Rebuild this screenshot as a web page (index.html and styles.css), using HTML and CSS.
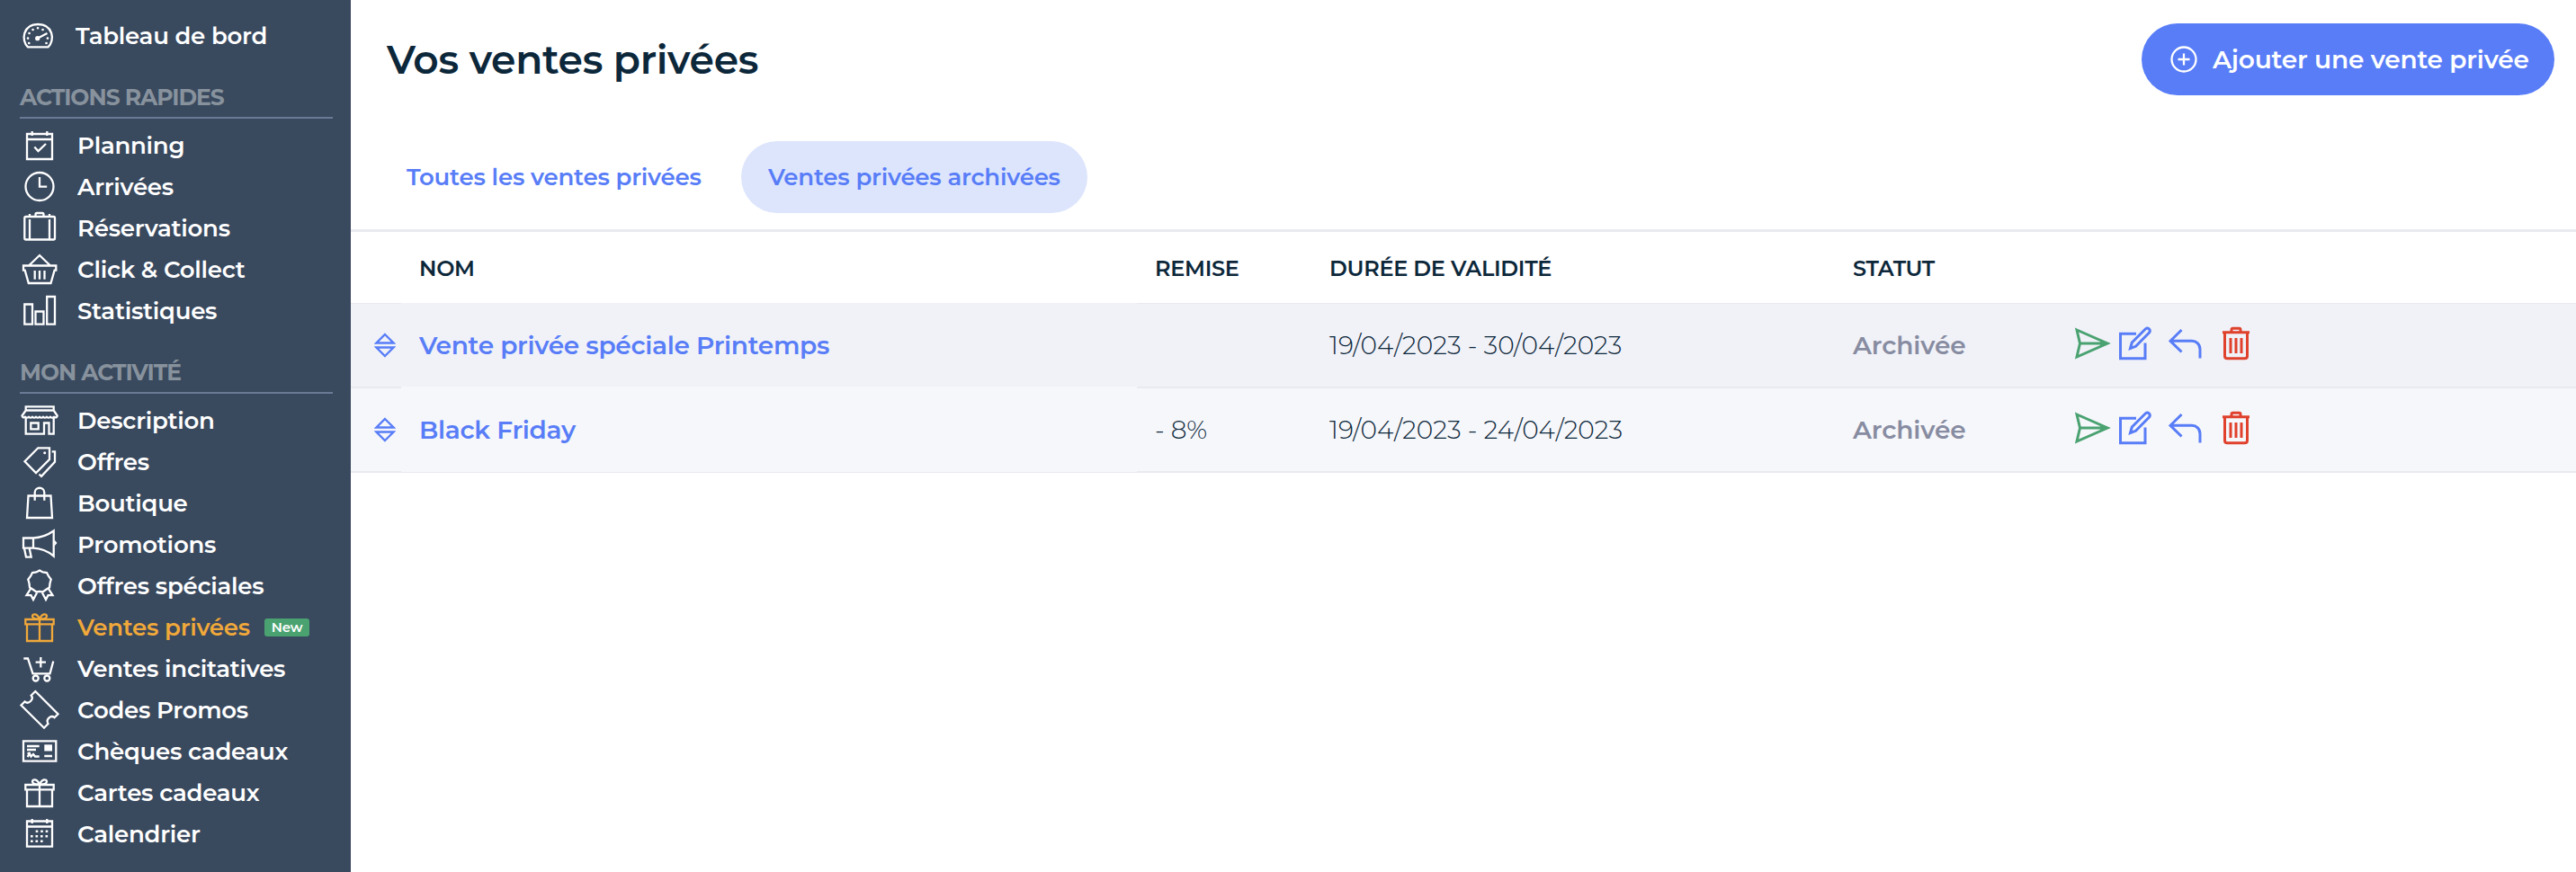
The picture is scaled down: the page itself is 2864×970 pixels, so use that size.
FILE: index.html
```html
<!DOCTYPE html>
<html lang="fr">
<head>
    <meta charset="UTF-8">
    <meta name="viewport" content="width=device-width, initial-scale=1.0">
    <title>Vos ventes privées</title>
    <link rel="stylesheet" href="styles.css">
</head>
<body>
    <svg class="sprite">
        <symbol id="gift" viewBox="0 0 46 46">
            <path d="M7.3 14H38.7V19.3H7.3ZM9 19.3V38H37V19.3M23 14V38M23 13.5C19 13.5 15 12.5 15 10.5C15 7.5 20 7 23 13.5C26 7 31 7.5 31 10.5C31 12.5 27 13.5 23 13.5"/>
        </symbol>
        <symbol id="sort" viewBox="0 0 24 28">
            <path d="M12 2L21.5 11.5H2.5ZM12 26L21.5 16.5H2.5Z"/>
        </symbol>
        <symbol id="send" viewBox="0 0 40 36">
            <path d="M2 3L36 18L2 33L5.5 18ZM5.5 18H36"/>
            <path d="M28 13.5L39 18L28 22.5Z" fill="currentColor" stroke="none"/>
        </symbol>
        <symbol id="edit" viewBox="0 0 38 38">
            <path d="M20 8.2H2.5V35.7H30V18.5M13.5 24.5L15.3 18L30.5 2.8C33 0.8 36.8 3.8 34.5 7L19.5 22.3Z"/>
        </symbol>
        <symbol id="reply" viewBox="0 0 38 36">
            <path d="M14.5 3L2 15.3L14.5 27.5M2 15.3H26C31 15.3 35 19 35 24.5V34.5"/>
        </symbol>
        <symbol id="trash" viewBox="0 0 32 38">
            <path d="M1 6.8H31M3.5 7V33C3.5 34.8 4.5 35.8 6.3 35.8H25.7C27.5 35.8 28.5 34.8 28.5 33V7M11 6.5V4C11 3 11.5 2.2 12.5 2.2H19.5C20.5 2.2 21 3 21 4V6.5M10 13V30M16 13V30M22 13V30"/>
        </symbol>
    </svg>

    <div class="page">
        <nav class="sidebar">
            <a class="item dashboard">
                <svg class="icon" viewBox="0 0 46 46">
                    <path d="M10 35.3C2 28 4.5 10 21.2 10C38 10 40.5 28 32.5 35.3Z"/>
                    <path d="M21 25.5L31.5 20"/>
                    <circle class="fill" cx="20.7" cy="25.7" r="2.6"/>
                    <path d="M10 25.6H10.1M11.5 20H11.6M15.5 16H15.6M21 14.3H21.1M26.5 16H26.6M31.9 25.6H32M11.2 31H11.3M30.5 31H30.6" stroke-linecap="round" stroke-width="2.6"/>
                </svg>
                <span>Tableau de bord</span>
            </a>

            <h2 class="section">ACTIONS RAPIDES</h2>
            <a class="item">
                <svg class="icon" viewBox="0 0 46 46"><path d="M9 10H37V38H9ZM9 16H37M14.7 7V12M31.3 7V12M17.3 24.5L21.5 29L30 21"/></svg>
                <span>Planning</span>
            </a>
            <a class="item">
                <svg class="icon" viewBox="0 0 46 46"><circle cx="23" cy="22.5" r="15.5"/><path d="M23 12V22.7H31.2"/></svg>
                <span>Arrivées</span>
            </a>
            <a class="item">
                <svg class="icon" viewBox="0 0 46 46"><rect x="6.3" y="10" width="33.7" height="25.5" rx="1.5"/><path d="M12 7V9M34 7V9M12 13V35M34 13V35M18.5 10V7.5Q18.5 6 20 6H26Q27.5 6 27.5 7.5V10"/></svg>
                <span>Réservations</span>
            </a>
            <a class="item">
                <svg class="icon" viewBox="0 0 46 46"><path d="M5 18.5H41.3V23.7H39.6L35.5 38H10.8L6.7 23.7H5ZM11.5 18L23 7L34.5 18M17.7 24V33.7M23 24V33.7M28.5 24V33.7"/></svg>
                <span>Click &amp; Collect</span>
            </a>
            <a class="item">
                <svg class="icon" viewBox="0 0 46 46"><path d="M6.3 15.5H15V37.7H6.3ZM18.5 23.5H27.5V37.7H18.5ZM31.2 7H40V37.7H31.2Z"/></svg>
                <span>Statistiques</span>
            </a>

            <h2 class="section">MON ACTIVITÉ</h2>
            <a class="item">
                <svg class="icon" viewBox="0 0 46 46"><path d="M7.7 11.5V7.3H38.7V11.5H7.7L3.5 17.5Q4.5 20.5 7 18.8Q9 20.5 11 18.8Q13 20.5 15 18.8Q17 20.5 19 18.8Q21 20.5 23 18.8Q25 20.5 27 18.8Q29 20.5 31 18.8Q33 20.5 35 18.8Q37 20.5 39 18.8Q42 20.5 42.7 17.5L38.7 11.5M7.7 19V37.7H28V25.5H33.5V37.7H38.7V19M13.3 25.5H21.7V32.3H13.3Z"/></svg>
                <span>Description</span>
            </a>
            <a class="item">
                <svg class="icon" viewBox="0 0 46 46"><path d="M6.5 22.3L21.3 7.3H34V20L19 35ZM36.7 11.3H40V22.8L25 38.8L22.5 36.5"/><circle class="fill" cx="28.7" cy="12.7" r="1.5"/></svg>
                <span>Offres</span>
            </a>
            <a class="item">
                <svg class="icon" viewBox="0 0 46 46"><path d="M10.5 14.5H35.5L37 39H9ZM17.7 19.7V11C17.7 4 28.3 4 28.3 11V19.7"/></svg>
                <span>Boutique</span>
            </a>
            <a class="item">
                <svg class="icon" viewBox="0 0 46 46"><path d="M5 15.5H16Q28 15 38.7 7.5V35.5Q28 27 16 26.7H5ZM16 15.5V26.7M6 27L8 36.7H13.7L11.7 27"/><path class="fill" d="M39.5 17.5L42.5 21L39.5 24.5Z"/></svg>
                <span>Promotions</span>
            </a>
            <a class="item">
                <svg class="icon" viewBox="0 0 46 46"><path d="M23 5.5L26.5 7.5L31 8L33 12L35.7 15.5L34.5 20L34 24.5L30 27L26.5 29.5L23 28.8L19.5 29.5L16 27L12 24.5L11.5 20L10.3 15.5L13 12L15 8L19.5 7.5ZM13 26L8.5 33.2H13.5L16 38L20.5 29.5M33 26L37.5 33.2H32.5L30 38L25.5 29.5"/></svg>
                <span>Offres spéciales</span>
            </a>
            <a class="item active">
                <svg class="icon"><use href="#gift"/></svg>
                <span>Ventes privées</span>
                <b class="badge">New</b>
            </a>
            <a class="item">
                <svg class="icon" viewBox="0 0 46 46"><path d="M5.3 11.5H10L15.5 28.3H34.5L38.3 14.5M24.3 10V21.5M18.6 15.7H30"/><circle cx="18.7" cy="33.5" r="3"/><circle cx="31.3" cy="33.5" r="3"/></svg>
                <span>Ventes incitatives</span>
            </a>
            <a class="item">
                <svg class="icon" viewBox="0 0 46 46"><path d="M18.3 2L43.5 27.2L39.5 31.2C35.5 28 29.5 33 32.5 38L28 42.7L2.5 17.5L6.5 13.5C11 17 17 11 13.7 6.5Z"/></svg>
                <span>Codes Promos</span>
            </a>
            <a class="item">
                <svg class="icon" viewBox="0 0 46 46"><path d="M5 11.3H41.3V33.7H5ZM9 17H22.7M9 21H19M28.3 28H37M9.5 29L12 25.5L13.5 28.5L16 26L18 28.5H22.7M9.5 25H13"/><path class="fill" d="M28.3 15.3H37V22.5H28.3Z"/></svg>
                <span>Chèques cadeaux</span>
            </a>
            <a class="item">
                <svg class="icon"><use href="#gift"/></svg>
                <span>Cartes cadeaux</span>
            </a>
            <a class="item">
                <svg class="icon" viewBox="0 0 46 46"><path d="M9 8.5H37V36.7H9ZM9 14.5H37M14.7 6V11M31.3 6V11"/><path d="M18.7 19.7H32.5M13 25.3H32.5M13 30.7H27" stroke-width="2.6" stroke-dasharray="2.6 2.9"/></svg>
                <span>Calendrier</span>
            </a>
        </nav>

        <main class="content">
            <header class="top">
                <h1>Vos ventes privées</h1>
                <a class="button">
                    <svg class="plus" viewBox="0 0 30 30"><circle cx="15" cy="15" r="13.5"/><path d="M15 8.5V21.5M8.5 15H21.5"/></svg>
                    <span>Ajouter une vente privée</span>
                </a>
            </header>

            <div class="tabs">
                <a class="tab">Toutes les ventes privées</a>
                <a class="tab selected">Ventes privées archivées</a>
            </div>

            <table class="sales">
                <colgroup>
                    <col class="col-sort"><col class="col-name"><col class="col-discount"><col class="col-dates"><col class="col-status"><col>
                </colgroup>
                <thead>
                    <tr>
                        <th></th>
                        <th>NOM</th>
                        <th>REMISE</th>
                        <th>DURÉE DE VALIDITÉ</th>
                        <th>STATUT</th>
                        <th></th>
                    </tr>
                </thead>
                <tbody>
                    <tr class="odd">
                        <td class="sort"><svg><use href="#sort"/></svg></td>
                        <td class="name">Vente privée spéciale Printemps</td>
                        <td></td>
                        <td class="dates">19/04/2023 - 30/04/2023</td>
                        <td class="status">Archivée</td>
                        <td>
                            <div class="actions">
                                <svg class="send"><use href="#send"/></svg>
                                <svg class="edit"><use href="#edit"/></svg>
                                <svg class="reply"><use href="#reply"/></svg>
                                <svg class="trash"><use href="#trash"/></svg>
                            </div>
                        </td>
                    </tr>
                    <tr class="even">
                        <td class="sort"><svg><use href="#sort"/></svg></td>
                        <td class="name">Black Friday</td>
                        <td class="dates">- 8%</td>
                        <td class="dates">19/04/2023 - 24/04/2023</td>
                        <td class="status">Archivée</td>
                        <td>
                            <div class="actions">
                                <svg class="send"><use href="#send"/></svg>
                                <svg class="edit"><use href="#edit"/></svg>
                                <svg class="reply"><use href="#reply"/></svg>
                                <svg class="trash"><use href="#trash"/></svg>
                            </div>
                        </td>
                    </tr>
                </tbody>
            </table>
        </main>
    </div>
</body>
</html>
```
FILE: styles.css
```css
* {
    box-sizing: border-box;
}
body {
    margin: 0;
    font-family: Montserrat, Inter, sans-serif;
    font-size: 28px;
    color: #0c273a;
    background-color: #fff;
}
svg {
    display: block;
    flex: none;
    fill: none;
    stroke: currentColor;
    stroke-width: 2.3;
    overflow: visible;
}
.sprite {
    position: absolute;
    width: 0;
    height: 0;
}
.fill {
    fill: currentColor;
    stroke: none;
}
.page {
    display: flex;
    height: 970px;
}

/* Sidebar */
.sidebar {
    flex: none;
    width: 390px;
    padding: 17px 20px 0 21px;
    background-color: #39495e;
    color: #fff;
    overflow: hidden;
}
.item {
    display: flex;
    align-items: center;
    height: 46px;
    font-size: 26px;
    font-weight: 600;
    letter-spacing: -0.25px;
    white-space: nowrap;
}
.icon {
    width: 46px;
    height: 46px;
    margin-right: 19px;
}
.dashboard .icon {
    margin-right: 17px;
}
.section {
    height: 69px;
    margin: 0 0 7px 1px;
    padding-top: 30px;
    border-bottom: 2px solid #6a7a94;
    font-size: 25px;
    line-height: 30px;
    font-weight: 700;
    letter-spacing: -1px;
    color: #87929d;
}
.active {
    color: #f0a83a;
}
.badge {
    height: 20px;
    margin-left: 16px;
    padding: 0 8px;
    border-radius: 3px;
    background-color: #4aa271;
    font-size: 15px;
    line-height: 20px;
    font-weight: 600;
    color: #fff;
}

/* Content */
.content {
    flex: 1;
    min-width: 0;
}
.top {
    display: flex;
    justify-content: space-between;
    align-items: center;
    padding: 26px 24px 0 40px;
}
h1 {
    margin: 0;
    font-size: 44px;
    line-height: 80px;
    font-weight: 600;
    letter-spacing: -0.3px;
}
.button {
    display: flex;
    align-items: center;
    gap: 17px;
    width: 459px;
    height: 80px;
    padding-left: 32px;
    border-radius: 40px;
    background-color: #587df7;
    color: #fff;
    font-weight: 600;
    letter-spacing: -0.2px;
    white-space: nowrap;
}
.plus {
    width: 30px;
    height: 30px;
}
.tabs {
    display: flex;
    gap: 14px;
    height: 152px;
    padding: 51px 0 0 32px;
    border-bottom: 3px solid #e9eaf0;
}
.tab {
    width: 388px;
    height: 80px;
    padding-left: 30px;
    border-radius: 40px;
    font-size: 26px;
    line-height: 80px;
    font-weight: 600;
    letter-spacing: -0.2px;
    color: #587df7;
    white-space: nowrap;
}
.selected {
    width: 385px;
    background-color: #dde5fd;
}

/* Table */
.sales {
    width: 100%;
    table-layout: fixed;
    border-collapse: separate;
    border-spacing: 0;
}
.col-sort {
    width: 56px;
}
.col-name {
    width: 818px;
}
.col-discount {
    width: 194px;
}
.col-dates {
    width: 582px;
}
.col-status {
    width: 247px;
}
th {
    height: 79px;
    padding: 2px 20px 0;
    font-size: 24px;
    font-weight: 600;
    letter-spacing: -0.3px;
    text-align: left;
}
td {
    height: 94px;
    padding: 0 20px;
    border-bottom: 2px solid #e9eaf0;
    white-space: nowrap;
}
.odd td {
    height: 95px;
    border-top: 1px solid #e9eaf0;
    background-color: #f1f2f8;
}
.even td {
    background-color: #f6f7fb;
}
.name {
    font-weight: 600;
    letter-spacing: -0.3px;
    color: #587df7;
}
.odd .name {
    border-top-color: #f1f2f8;
    border-bottom-color: #f6f7fb;
}
.even .name {
    padding-bottom: 2px;
    border-bottom-width: 1px;
}
.dates {
    font-weight: 300;
}
.status {
    font-weight: 600;
    letter-spacing: -0.1px;
    color: #878ca1;
}
.sort {
    padding: 0 0 0 26px;
    color: #587df7;
}
.sort svg {
    width: 24px;
    height: 28px;
}
.actions {
    display: flex;
    align-items: center;
    padding-bottom: 4px;
    color: #587df7;
}
.actions svg {
    height: 38px;
    stroke-width: 3;
}
.actions .send {
    width: 40px;
    height: 36px;
    color: #4aa271;
}
.edit {
    width: 38px;
    margin-left: 8px;
}
.actions .reply {
    width: 38px;
    height: 36px;
    margin-left: 18px;
}
.trash {
    width: 32px;
    margin-left: 21px;
    color: #df412c;
}
```
